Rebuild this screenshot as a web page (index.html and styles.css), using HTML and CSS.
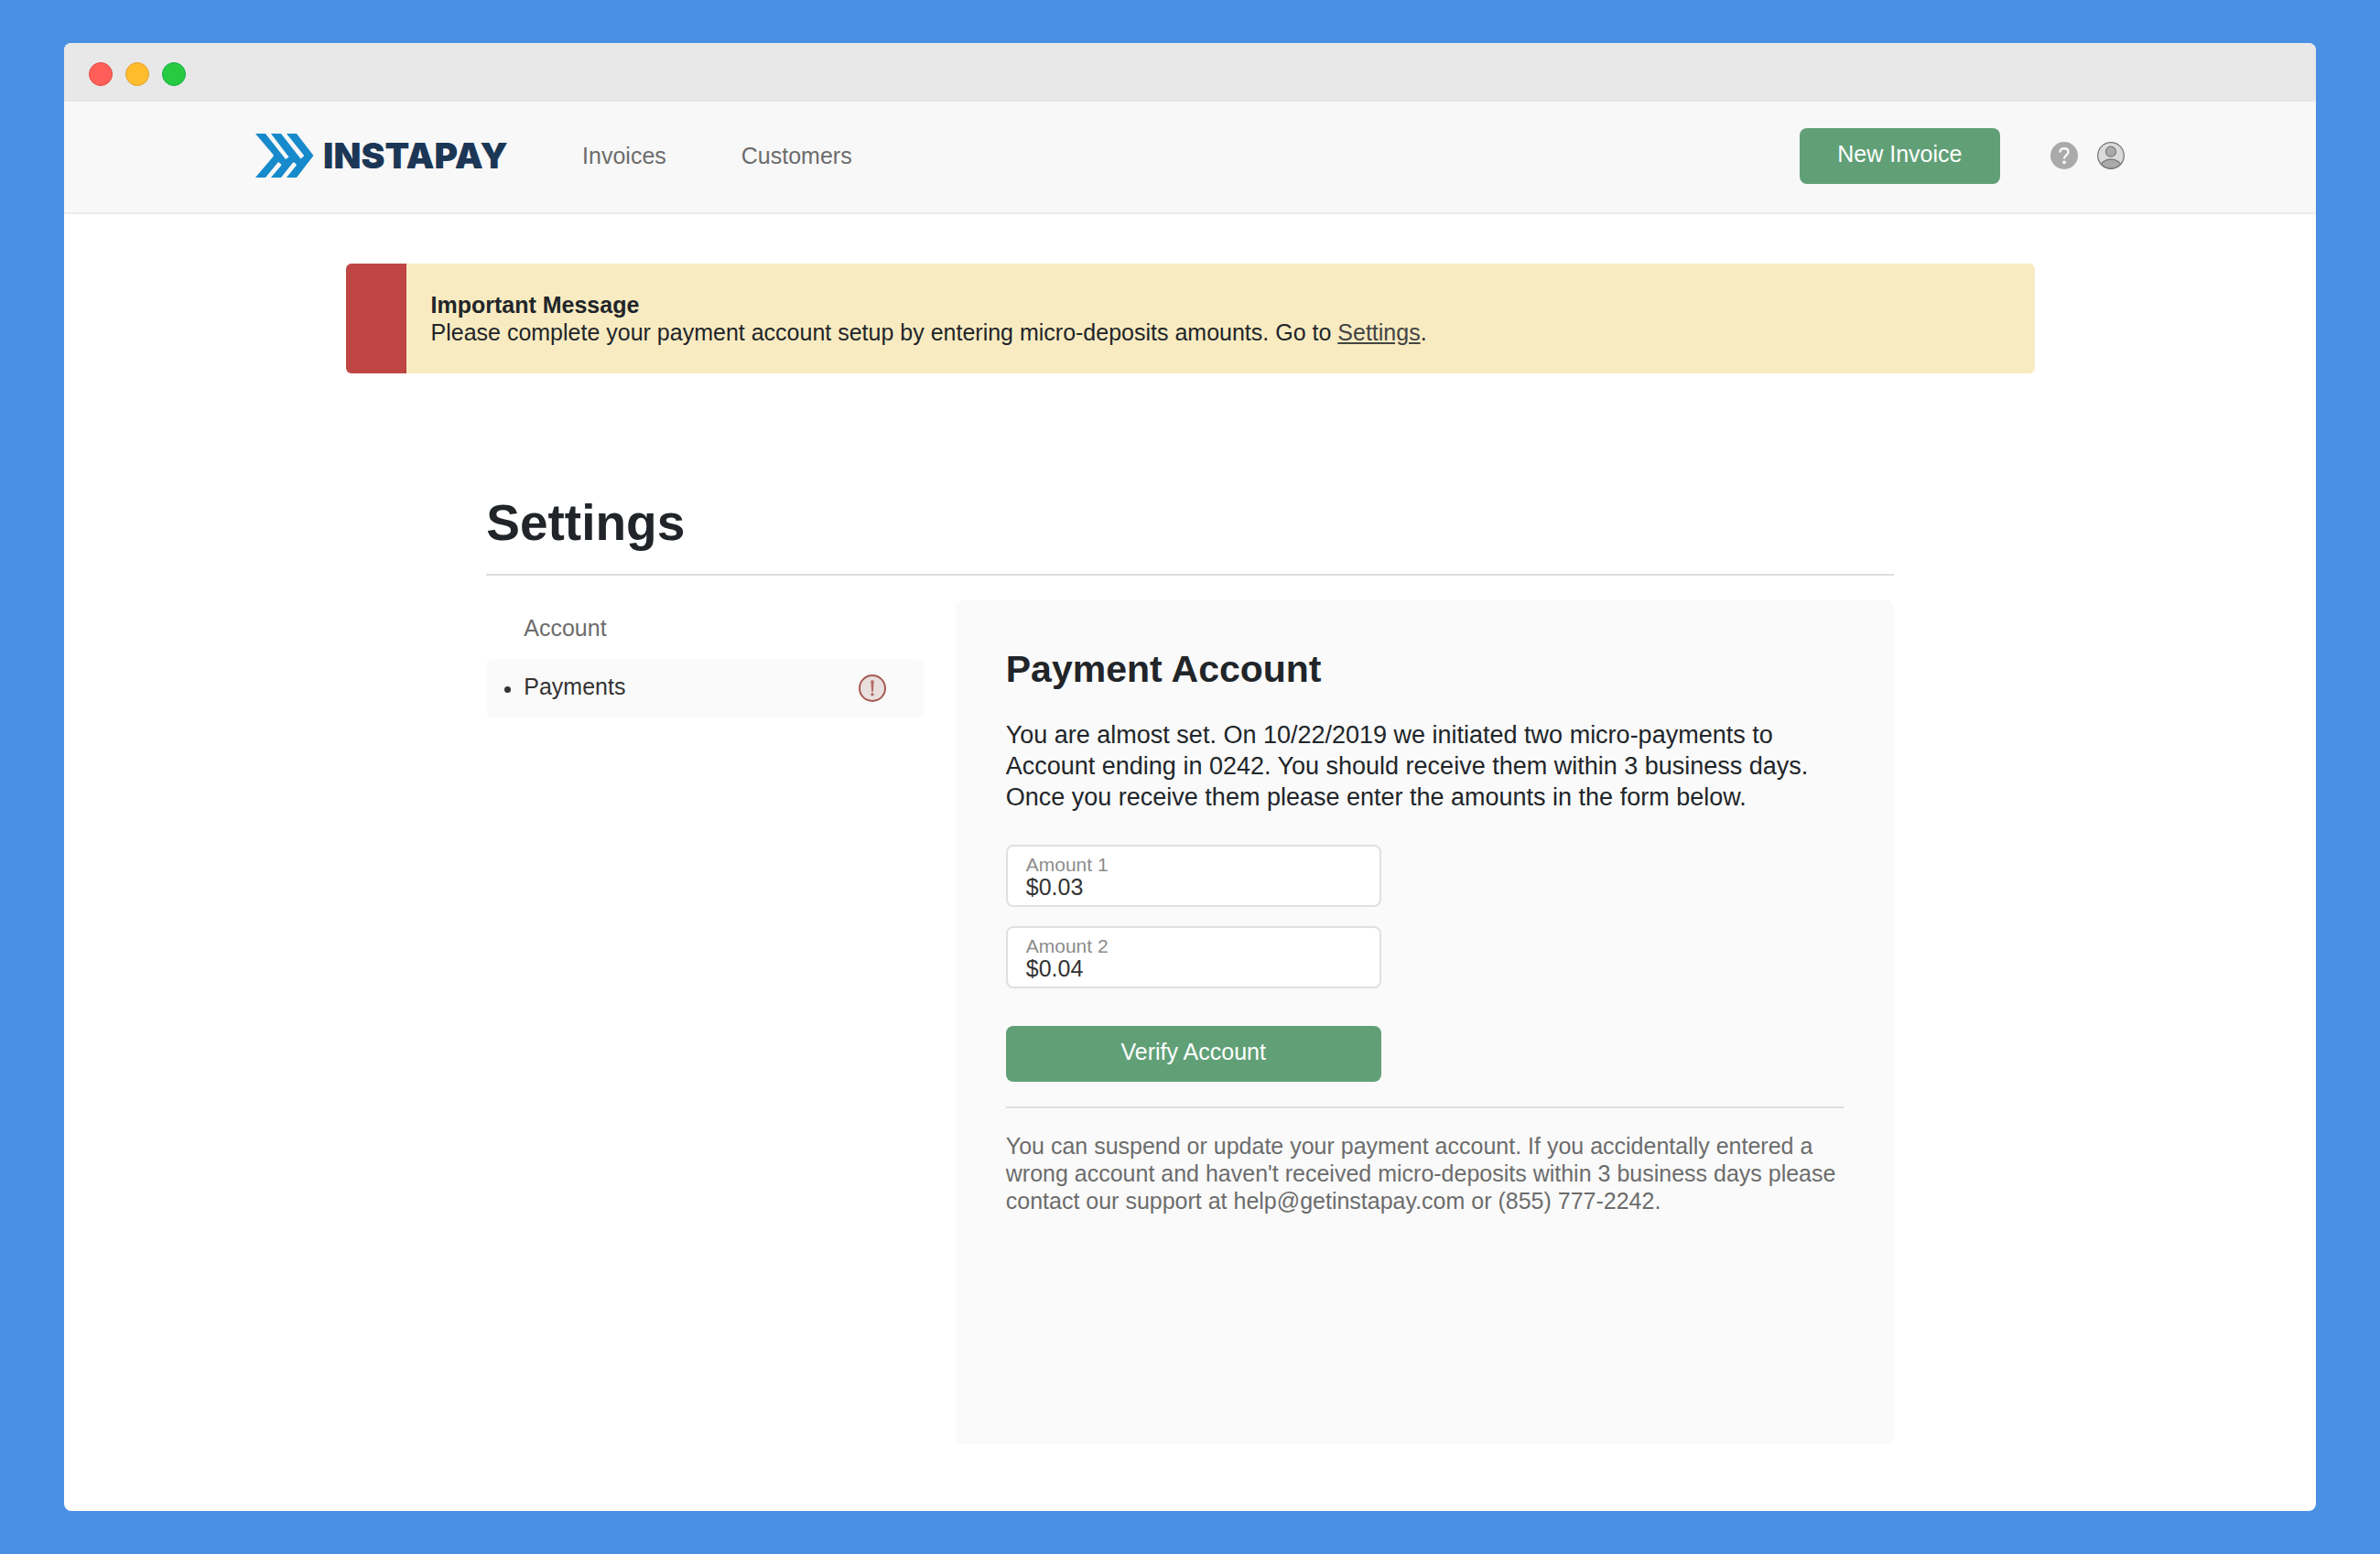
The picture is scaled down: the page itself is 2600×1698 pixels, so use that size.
FILE: index.html
```html
<!DOCTYPE html>
<html lang="en">
<head>
<meta charset="utf-8">
<meta name="viewport" content="width=device-width, initial-scale=1">
<title>Settings – Instapay</title>
<link rel="stylesheet" href="styles.css">
</head>
<body>
<div class="window">
  <div class="titlebar">
    <span class="dot dot-close"></span>
    <span class="dot dot-minimize"></span>
    <span class="dot dot-zoom"></span>
  </div>

  <header class="header">
    <a class="brand" href="#">
      <svg class="brand-mark" viewBox="0 0 64 48" aria-hidden="true">
        <path fill="#178acb" d="M0 0H11L33 28L36.500 25.500L17 0H28L49.500 27.500L53 24.500Q53.300 24 52.800 23.400L34 0H45L63.500 24L45 48H34L44.500 35Q45.200 34 44.300 33L41.500 31L28 48H17L28 35Q28.600 34 27.800 33L25 31L11 48H0L19.500 25Q20.200 24 19.500 23Z"/>
      </svg>
      <span class="brand-name">INSTAPAY</span>
    </a>
    <nav class="nav" aria-label="Main">
      <a href="#">Invoices</a>
      <a href="#">Customers</a>
    </nav>
    <button class="button button-new" type="button">New Invoice</button>
    <div class="tools">
      <a class="tool" href="#" aria-label="Help">
        <svg viewBox="0 0 30 30" aria-hidden="true">
          <circle cx="15" cy="15" r="15" fill="#aaa"/>
          <path d="M10.500 11.500C10.500 8.500 12.300 7.300 15 7.300S19.500 8.900 19.500 11.200C19.500 14.500 15 14.300 15 18.500" fill="none" stroke="#f8f8f8" stroke-width="2.400"/>
          <circle cx="15" cy="22.300" r="1.900" fill="#f8f8f8"/>
        </svg>
      </a>
      <a class="tool" href="#" aria-label="Profile">
        <svg viewBox="0 0 30 30" aria-hidden="true">
          <circle cx="15" cy="15" r="14.300" fill="#dadada"/>
          <path d="M4.300 24.300C9 17.300 21 17.300 25.700 24.300A14.300 14.300 0 0 1 4.300 24.300Z" fill="#aaa" stroke="#777" stroke-width="1.200"/>
          <circle cx="15" cy="10.700" r="5.500" fill="#aaa" stroke="#777" stroke-width="1.200"/>
          <circle cx="15" cy="15" r="14.300" fill="none" stroke="#777" stroke-width="1.300"/>
        </svg>
      </a>
    </div>
  </header>

  <main class="main">
    <section class="notice">
      <h2 class="notice-title">Important Message</h2>
      <p class="notice-text">Please complete your payment account setup by entering micro-deposits amounts. Go to <a href="#">Settings</a>.</p>
    </section>

    <section class="settings">
      <h1 class="settings-title">Settings</h1>
      <div class="settings-body">
        <nav class="side" aria-label="Settings">
          <a class="side-item" href="#">Account</a>
          <a class="side-item side-item-active" href="#" aria-current="page">
            <span class="bullet"></span>
            <span class="side-label">Payments</span>
            <svg class="alert" viewBox="0 0 30 30" aria-hidden="true">
              <circle cx="15" cy="15" r="14" fill="#e9dfdd" stroke="#a65a52" stroke-width="2"/>
              <path d="M13.300 6.500H16.700L15.900 18.800H14.100Z" fill="#b06b63"/>
              <circle cx="15" cy="21.800" r="1.700" fill="#b06b63"/>
            </svg>
          </a>
        </nav>

        <div class="panel">
          <h2 class="panel-title">Payment Account</h2>
          <p class="panel-text">You are almost set. On 10/22/2019 we initiated two micro-payments to Account ending in 0242. You should receive them within 3 business days. Once you receive them please enter the amounts in the form below.</p>
          <form class="form">
            <div class="field">
              <label for="amount-1">Amount 1</label>
              <input id="amount-1" type="text" value="$0.03">
            </div>
            <div class="field">
              <label for="amount-2">Amount 2</label>
              <input id="amount-2" type="text" value="$0.04">
            </div>
            <button class="button button-verify" type="button">Verify Account</button>
          </form>
          <p class="panel-note">You can suspend or update your payment account. If you accidentally entered a wrong account and haven't received micro-deposits within 3 business days please contact our support at help@getinstapay.com or (855) 777-2242.</p>
        </div>
      </div>
    </section>
  </main>
</div>
</body>
</html>
```
FILE: styles.css
```css
* {
  box-sizing: border-box;
}

body {
  margin: 0;
  padding: 47px 70px;
  background: #4a90e2;
  color: #212529;
  font: 25px/30px "Liberation Sans", Arial, sans-serif;
}

h1, h2, p {
  margin: 0;
}

a {
  color: inherit;
  text-decoration: none;
}

.window {
  display: flex;
  flex-direction: column;
  min-height: calc(100vh - 94px);
  border-radius: 8px;
  background: #fff;
  overflow: hidden;
}

/* Title bar */
.titlebar {
  display: flex;
  align-items: center;
  gap: 14px;
  height: 64px;
  padding: 4px 27px 0;
  background: #e8e8e8;
}

.dot {
  width: 26px;
  height: 26px;
  border: 1px solid;
  border-radius: 50%;
}

.dot-close {
  background: #ff5f58;
  border-color: #e2463f;
}

.dot-minimize {
  background: #ffbd2e;
  border-color: #e1a032;
}

.dot-zoom {
  background: #28ca42;
  border-color: #14ae46;
}

/* Header */
.header {
  display: flex;
  align-items: center;
  min-height: 123px;
  padding: 0 8.5% 3px;
  border-bottom: 2px solid #ededed;
  background: #f8f8f8;
}

.brand {
  display: flex;
  align-items: center;
  gap: 10px;
  min-width: 277px;
}

.brand-mark {
  width: 64px;
  height: 48px;
}

.brand-name {
  color: #1c3756;
  font: 900 39px/48px Inter, sans-serif;
}

.nav {
  display: flex;
  gap: 82px;
  margin-left: 80px;
  color: #6c6c6c;
}

.button {
  padding: 13px 40px 18px;
  border: 0;
  border-radius: 8px;
  background: #61a077;
  color: #fff;
  font: inherit;
}

.button-new {
  min-width: 219px;
  margin-left: auto;
}

.tools {
  display: flex;
  gap: 21px;
  margin-left: 55px;
}

.tool {
  width: 30px;
  height: 30px;
}

.tool svg {
  display: block;
}

/* Main area */
.main {
  display: flex;
  flex: 1;
  flex-direction: column;
  padding: 54px 0 73px;
}

.notice {
  margin: 0 12.5%;
  padding: 30px 27px;
  border-left: 66px solid #be4543;
  border-radius: 6px;
  background: #f9ebc1;
}

.notice-title {
  font: inherit;
  font-weight: 700;
}

.notice-text a {
  color: #444;
  text-decoration: underline;
}

.settings {
  display: flex;
  flex: 1;
  flex-direction: column;
  margin: 133px 18.75% 0;
}

.settings-title {
  padding-bottom: 26px;
  border-bottom: 2px solid #dedede;
  font-size: 55px;
  line-height: 60px;
}

.settings-body {
  display: grid;
  flex: 1;
  grid-template-columns: 1fr 2fr;
  padding-top: 27px;
}

.side {
  padding-right: 35px;
}

.side-item {
  display: flex;
  padding: 15px 41px 19px;
  border-radius: 8px;
  color: #6c6c6c;
}

.side-item-active {
  position: relative;
  background: #fafafa;
  color: #333;
}

.bullet {
  position: absolute;
  top: 30px;
  left: 20px;
  width: 7px;
  height: 7px;
  border-radius: 50%;
  background: #333;
}

.side-label {
  flex: 1;
}

.alert {
  width: 30px;
  height: 32px;
  padding-top: 2px;
  margin-bottom: -2px;
}

/* Payment panel */
.panel {
  padding: 51px 55px;
  border-radius: 8px;
  background: #fafafa;
}

.panel-title {
  font-size: 41px;
  line-height: 48px;
}

.panel-text {
  margin-top: 31px;
  font-size: 27px;
  line-height: 34px;
}

.form {
  max-width: 410px;
  padding: 35px 0 27px;
}

.field {
  margin-bottom: 21px;
  padding: 9px 20px 7px;
  border: 2px solid #e0e0e0;
  border-radius: 8px;
  background: #fff;
}

.field label {
  display: block;
  color: #8c8c8c;
  font-size: 21px;
  line-height: 22px;
}

.field input {
  display: block;
  width: 100%;
  height: 26px;
  padding: 0;
  border: 0;
  outline: 0;
  background: none;
  color: #333;
  font: inherit;
  line-height: 26px;
}

.button-verify {
  width: 100%;
  margin-top: 20px;
}

.panel-note {
  padding-top: 26px;
  border-top: 2px solid #dedede;
  color: #6c6c6c;
}
```
